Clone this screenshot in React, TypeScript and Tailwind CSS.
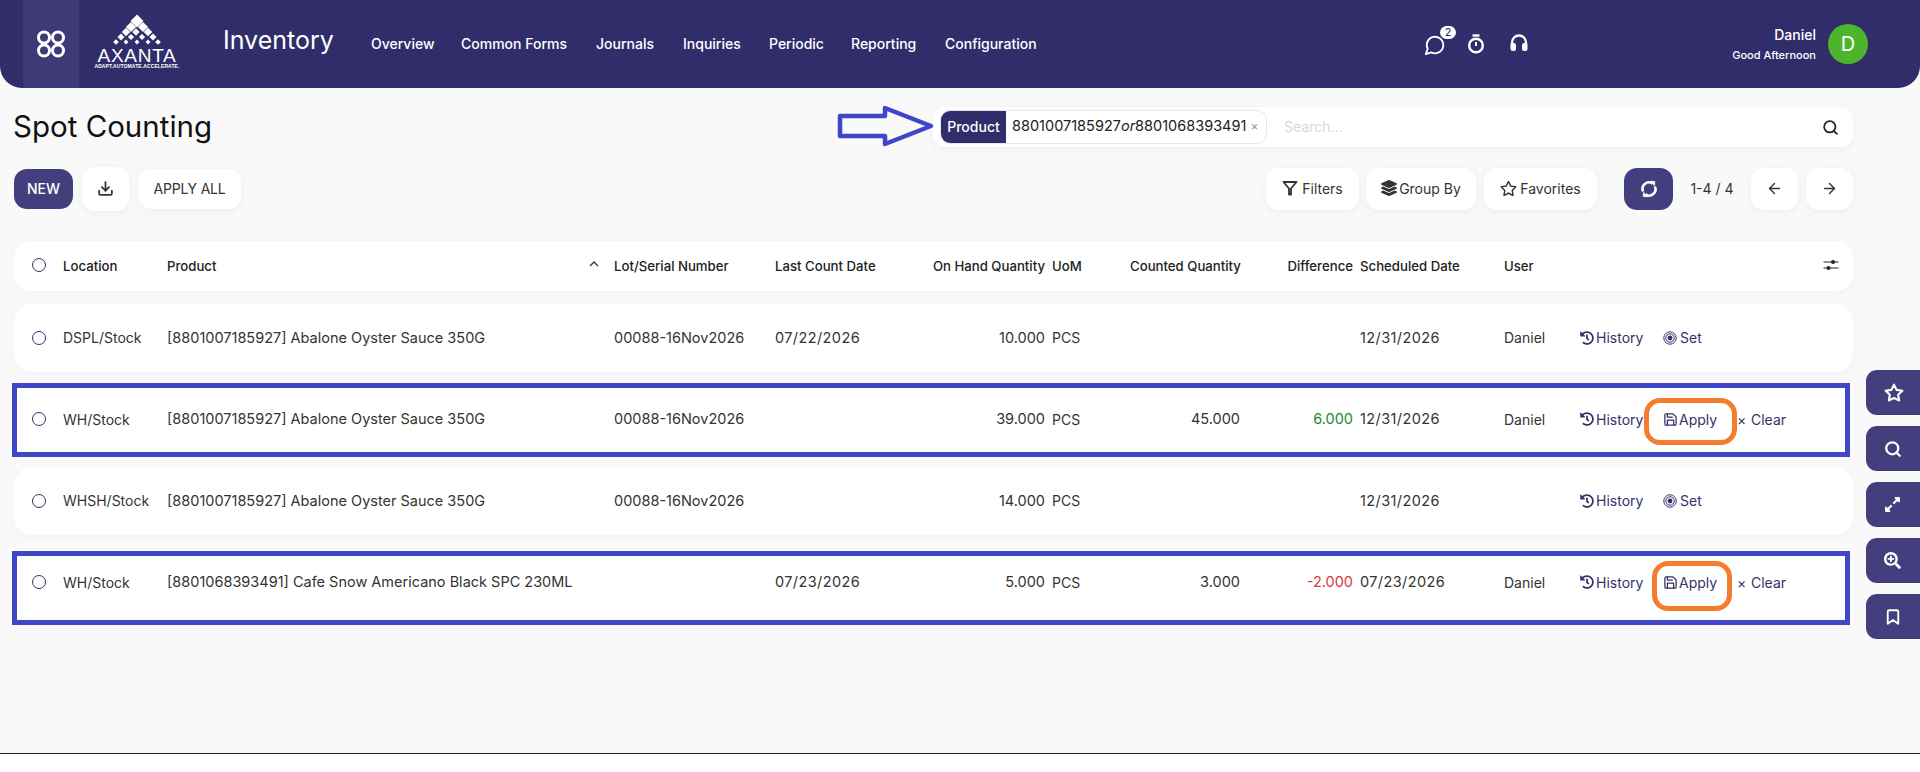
import React from "react";
import { FiDownload, FiStar, FiSearch, FiBookmark, FiArrowLeft, FiArrowRight, FiSave } from "react-icons/fi";
import { FaLayerGroup, FaExpandAlt, FaSearchPlus, FaHistory, FaRegStar } from "react-icons/fa";
import { LuMessageCircle } from "react-icons/lu";

const cols = "grid grid-cols-[49px_104px_447px_161px_130px_140px_85px_110px_113px_151px_76px_1fr] items-center";

function Logo() {
  const rows = [
    [[136, 23, 4.6]],
    [[130, 29, 3.6], [142, 29, 3.6]],
    [[125, 34, 3], [135, 34, 2.6], [147, 34, 3]],
    [[120, 39, 2.5], [130, 39, 2.2], [141, 39, 2.2], [152, 39, 2.5]],
    [[115, 44, 2], [125, 44, 1.7], [136, 44, 1.7], [147, 44, 1.7], [157, 44, 2]],
  ];
  return (
    <div className="w-[88px] h-[56px] flex flex-col items-center relative shrink-0">
      <svg width="88" height="34" viewBox="92 16 88 34" className="block">
        {rows.flat().map((d, i) => (
          <rect key={i} x={d[0] - d[2]} y={d[1] - d[2]} width={d[2] * 2} height={d[2] * 2} fill="#fff" transform={`rotate(45 ${d[0]} ${d[1]})`} />
        ))}
      </svg>
      <div className="text-white text-[19px] leading-[15px] font-['Liberation_Sans',sans-serif] font-normal tracking-[0.7px]">AXANTA</div>
      <div className="text-white text-[5px] leading-[6px] tracking-[0.1px] font-['Liberation_Sans',sans-serif] font-bold whitespace-nowrap">ADAPT.AUTOMATE.ACCELERATE.</div>
    </div>
  );
}

function NavItem({ children, w }: { children: React.ReactNode; w: string }) {
  return <div className={`${w} text-white text-[14px] font-medium whitespace-nowrap`}>{children}</div>;
}

function Btn({ children, className }: { children: React.ReactNode; className: string }) {
  return (
    <div className={`bg-white rounded-[13px] flex items-center justify-center pb-[2px] shadow-[0_2px_8px_rgba(0,0,0,0.05)] text-[14px] text-[#333] ${className}`}>{children}</div>
  );
}

function SetIcon() {
  return (
    <svg width="14" height="14" viewBox="0 0 14 14" fill="none" stroke="#35316b">
      <circle cx="7" cy="7" r="6.2" strokeWidth="1" />
      <circle cx="7" cy="7" r="4.2" strokeWidth="1" />
      <circle cx="7" cy="7" r="2.4" fill="#35316b" strokeWidth="0" />
    </svg>
  );
}

function Actions({ mode }: { mode: "set" | "apply" }) {
  return (
    <div className="flex items-center text-[14px] text-[#35316b] whitespace-nowrap">
      <FaHistory size={14} className="mr-[2px] w-[14px]" />
      <span className="w-[67px]">History</span>
      {mode === "set" ? (
        <>
          <span className="mr-[3px] flex"><SetIcon /></span>
          <span>Set</span>
        </>
      ) : (
        <>
          <FiSave size={15} className="mr-[1px]" />
          <span className="w-[58px]">Apply</span>
          <span className="w-[14px] text-[#35316b]">×</span>
          <span>Clear</span>
        </>
      )}
    </div>
  );
}

type RowData = {
  loc: string; product: string; lot: string; last: string; onHand: string; counted: string; diff: string; diffC: string; date: string; user: string; mode: "set" | "apply"; overlay?: string; orange?: string;
};

const data: RowData[] = [
  { loc: "DSPL/Stock", product: "[8801007185927] Abalone Oyster Sauce 350G", lot: "00088-16Nov2026", last: "07/22/2026", onHand: "10.000", counted: "", diff: "", diffC: "", date: "12/31/2026", user: "Daniel", mode: "set" },
  { loc: "WH/Stock", product: "[8801007185927] Abalone Oyster Sauce 350G", lot: "00088-16Nov2026", last: "", onHand: "39.000", counted: "45.000", diff: "6.000", diffC: "text-[#1e8a2e]", date: "12/31/2026", user: "Daniel", mode: "apply", overlay: "-top-[3px] -bottom-[3px]", orange: "left-[1632px] w-[93px] top-[12px] h-[47px]" },
  { loc: "WHSH/Stock", product: "[8801007185927] Abalone Oyster Sauce 350G", lot: "00088-16Nov2026", last: "", onHand: "14.000", counted: "", diff: "", diffC: "", date: "12/31/2026", user: "", mode: "set" },
  { loc: "WH/Stock", product: "[8801068393491] Cafe Snow Americano Black SPC 230ML", lot: "", last: "07/23/2026", onHand: "5.000", counted: "3.000", diff: "-2.000", diffC: "text-[#d9383f]", date: "07/23/2026", user: "Daniel", mode: "apply", overlay: "top-[2px] -bottom-[8px]", orange: "left-[1640px] w-[80px] top-[12px] h-[50px]" },
];

export default function App() {
  return (
    <div className="w-[1920px] h-[772px] overflow-hidden relative bg-white font-['Inter',sans-serif] text-[14px] text-[#333]">
      <div className="h-[753px] bg-[#f9f9fa] border-b border-[#222] box-content">
        {/* Header */}
        <header className="h-[88px] bg-[#312d6b] rounded-b-[22px] flex items-center pl-[23px] relative">
          <div className="w-[56px] h-full bg-[#3e3a76] flex items-center justify-center shrink-0">
            <svg width="30" height="28" viewBox="0 0 30 28" fill="none" stroke="#fff" strokeWidth="3">
              <circle cx="8" cy="7.5" r="5.5" />
              <circle cx="22" cy="7.5" r="5.5" />
              <circle cx="8" cy="20.5" r="5.5" />
              <circle cx="22" cy="20.5" r="5.5" />
            </svg>
          </div>
          <div className="ml-[14px] mt-[-4px]"><Logo /></div>
          <div className="ml-[42px] w-[148px] text-white text-[25px] font-normal mt-[-7px]">Inventory</div>
          <nav className="flex items-center mt-[-2px]">
            <NavItem w="w-[90px]">Overview</NavItem>
            <NavItem w="w-[135px]">Common Forms</NavItem>
            <NavItem w="w-[87px]">Journals</NavItem>
            <NavItem w="w-[86px]">Inquiries</NavItem>
            <NavItem w="w-[82px]">Periodic</NavItem>
            <NavItem w="w-[94px]">Reporting</NavItem>
            <NavItem w="w-[92px]">Configuration</NavItem>
          </nav>
          <div className="ml-[387px] flex items-center text-white w-[110px]">
            <div className="relative w-[36px] h-[24px] flex items-center">
              <LuMessageCircle size={22} strokeWidth={2} className="mt-[2px]" />
              <div className="absolute left-[16px] -top-[6px] w-[16px] h-[13px] rounded-full bg-white text-[#312d6b] text-[10px] font-medium flex items-center justify-center">2</div>
            </div>
            <svg width="18" height="20" viewBox="0 0 18 20" fill="none" stroke="#fff" strokeWidth="2.4" className="ml-[7px] -mt-[1px]">
              <path d="M5.5 1.5 H12.5" />
              <circle cx="9" cy="11.5" r="6.8" />
              <path d="M9 8 V12" strokeWidth="2" />
            </svg>
            <svg width="20" height="19" viewBox="0 0 20 19" fill="none" className="ml-[24px] -mt-[1px]">
              <path d="M3 11 V8.5 a7 7 0 0 1 14 0 V11" stroke="#fff" strokeWidth="2.3" />
              <rect x="1.5" y="9" width="5.5" height="8" rx="2.2" fill="#fff" />
              <rect x="13" y="9" width="5.5" height="8" rx="2.2" fill="#fff" />
            </svg>
          </div>
          <div className="ml-auto flex items-center pr-[52px]">
            <div className="text-right text-white mr-[12px]">
              <div className="text-[14px] font-medium leading-[20px]">Daniel</div>
              <div className="text-[11px] font-medium leading-[18px] mt-[1px]">Good Afternoon</div>
            </div>
            <div className="w-[40px] h-[40px] rounded-full bg-[#4db52b] text-white text-[20px] flex items-center justify-center">D</div>
          </div>
        </header>

        {/* Title + search */}
        <div className="flex items-center h-[40px] mt-[19px] pl-[13px] pr-[67px]">
          <h1 className="text-[29.5px] text-[#111] font-normal leading-none w-[825px]">Spot Counting</h1>
          <div className="relative w-[95px] h-[40px] shrink-0">
            <svg width="100" height="44" viewBox="0 0 100 44" className="absolute left-[-2px] top-[-3px]" fill="none" stroke="#3f46c8" strokeWidth="4.5" strokeLinejoin="round">
              <path d="M4 12 H49 V4 L95 22 L49 40 V32 H4 Z" />
            </svg>
          </div>
          <div className="flex-1 h-[40px] bg-white rounded-[12px] shadow-[0_2px_8px_rgba(0,0,0,0.05)] flex items-center pl-[7px] pr-[14px]">
            <div className="h-[34px] w-[327px] flex rounded-[10px] border border-[#e6e6e6] overflow-hidden shrink-0">
              <div className="w-[65px] bg-[#312d6b] text-white text-[14px] font-medium flex items-center justify-center pb-[2px]">Product</div>
              <div className="flex-1 flex items-center pl-[6px] pb-[2px] text-[14.5px] text-[#222] whitespace-nowrap">
                8801007185927<em>or</em>8801068393491<span className="ml-[4px] text-[#999] text-[12px]">×</span>
              </div>
            </div>
            <div className="ml-[17px] text-[14px] text-[#d8d8d8] pb-[2px]">Search...</div>
            <FiSearch size={17} strokeWidth={2.5} className="ml-auto text-[#222]" />
          </div>
        </div>

        {/* Toolbar */}
        <div className="flex items-center h-[42px] mt-[21px] pl-[14px] pr-[67px]">
          <div className="w-[59px] h-[40px] rounded-[13px] bg-[#433f7f] text-white font-medium text-[14px] flex items-center justify-center pb-[2px]">NEW</div>
          <Btn className="w-[47px] h-[44px] ml-[9px]"><FiDownload size={17} strokeWidth={2.5} /></Btn>
          <Btn className="w-[103px] h-[40px] ml-[9px] tracking-[-0.2px]">APPLY ALL</Btn>
          <Btn className="w-[93px] h-[42px] ml-[1025px]">
            <svg width="16" height="16" viewBox="0 0 16 16" fill="none" stroke="#333" strokeWidth="1.8" strokeLinejoin="round" className="mr-[4px]"><path d="M1.5 2 H14.5 L9 8.5 V14.5 L7 14.5 V8.5 Z" /></svg>
            Filters
          </Btn>
          <Btn className="w-[110px] h-[42px] ml-[7px]"><FaLayerGroup size={16} className="mr-[2px]" />Group By</Btn>
          <Btn className="w-[113px] h-[42px] ml-[8px]"><FaRegStar size={17} className="mr-[3px]" />Favorites</Btn>
          <div className="w-[49px] h-[42px] rounded-[13px] bg-[#433f7f] text-white flex items-center justify-center ml-[27px]">
            <svg width="20" height="20" viewBox="0 0 20 20" fill="none" stroke="#fff" strokeWidth="2.6">
              <path d="M4.2 12.5 A6.3 6.3 0 0 1 13.5 4.6" />
              <path d="M15.8 7.5 A6.3 6.3 0 0 1 6.5 15.4" />
              <path d="M11.5 2 L16 2.5 L15.5 7 Z" fill="#fff" strokeWidth="0.5" />
              <path d="M8.5 18 L4 17.5 L4.5 13 Z" fill="#fff" strokeWidth="0.5" />
            </svg>
          </div>
          <div className="w-[78px] text-center text-[14px] text-[#333] pb-[2px]">1-4 / 4</div>
          <Btn className="w-[47px] h-[42px]"><FiArrowLeft size={17} /></Btn>
          <Btn className="w-[47px] h-[42px] ml-[8px]"><FiArrowRight size={17} /></Btn>
        </div>

        {/* Table */}
        <div className="mt-[31px] pl-[14px] pr-[67px]">
          <div className={`${cols} h-[50px] pt-[2px] bg-white rounded-[16px] text-[13.2px] font-medium text-[#222] whitespace-nowrap shadow-[0_2px_8px_rgba(0,0,0,0.03)]`}>
            <div className="flex justify-center"><span className="w-[14px] h-[14px] rounded-full border border-[#35316b] -mt-[5px]"></span></div>
            <div>Location</div>
            <div className="flex items-center justify-between pr-[14px]"><span>Product</span><svg width="12" height="8" viewBox="0 0 12 8" fill="none" stroke="#333" strokeWidth="1.3" className="-mt-[5px]"><path d="M2 6 L6 2 L10 6" /></svg></div>
            <div>Lot/Serial Number</div>
            <div>Last Count Date</div>
            <div className="text-right">On Hand Quantity</div>
            <div className="pl-[7px]">UoM</div>
            <div className="text-right">Counted Quantity</div>
            <div className="text-right">Difference</div>
            <div className="pl-[7px]">Scheduled Date</div>
            <div>User</div>
            <div className="flex justify-end pr-[14px]">
              <svg width="16" height="14" viewBox="0 0 16 14" fill="#222" stroke="#222" className="-mt-[5px]">
                <path d="M0.5 4 H15.5 M0.5 10 H15.5" strokeWidth="1.2" />
                <circle cx="10" cy="4" r="2" strokeWidth="0" />
                <circle cx="5.5" cy="10" r="2" strokeWidth="0" />
              </svg>
            </div>
          </div>

          <div className="mt-[13px] flex flex-col gap-[13.5px]">
            {data.map((r, i) => (
              <div key={i} className={`relative ${r.overlay ? "mr-[3px] -ml-[2px]" : ""}`}>
                <div className={`${cols} h-[68px] pb-[1px] bg-white ${r.overlay ? "pl-[2px]" : "rounded-[18px] shadow-[0_2px_8px_rgba(0,0,0,0.03)]"} text-[14.5px] text-[#333] whitespace-nowrap`}>
                  <div className="flex justify-center"><span className="w-[14px] h-[14px] rounded-full border border-[#35316b]"></span></div>
                  <div className="text-[14px]">{r.loc}</div>
                  <div>{r.product}</div>
                  <div>{r.lot}</div>
                  <div className="tracking-[0.4px]">{r.last}</div>
                  <div className="text-right">{r.onHand}</div>
                  <div className="pl-[7px] text-[14px]">PCS</div>
                  <div className="text-right">{r.counted}</div>
                  <div className={`text-right ${r.diffC}`}>{r.diff}</div>
                  <div className="pl-[7px] tracking-[0.4px]">{r.date}</div>
                  <div className="text-[14px]">{r.user}</div>
                  <Actions mode={r.mode} />
                </div>
                {r.overlay && <div className={`absolute left-0 right-0 border-[5px] border-[#3f46c8] ${r.overlay}`}></div>}
                {r.orange && <div className={`absolute border-[5px] border-[#f47c2a] rounded-[16px] ${r.orange}`}></div>}
              </div>
            ))}
          </div>
        </div>
      </div>

      {/* Floating side buttons */}
      <div className="absolute right-0 top-[370px] flex flex-col gap-[11px]">
        {[<FiStar size={20} strokeWidth={2.5} />, <FiSearch size={18} strokeWidth={3} />, <FaExpandAlt size={17} />, <FaSearchPlus size={17} />, <FiBookmark size={18} strokeWidth={2.5} />].map((ic, i) => (
          <div key={i} className="w-[54px] h-[45px] bg-[#433f7f] rounded-l-[11px] text-white flex items-center pl-[18px]">{ic}</div>
        ))}
      </div>
    </div>
  );
}
